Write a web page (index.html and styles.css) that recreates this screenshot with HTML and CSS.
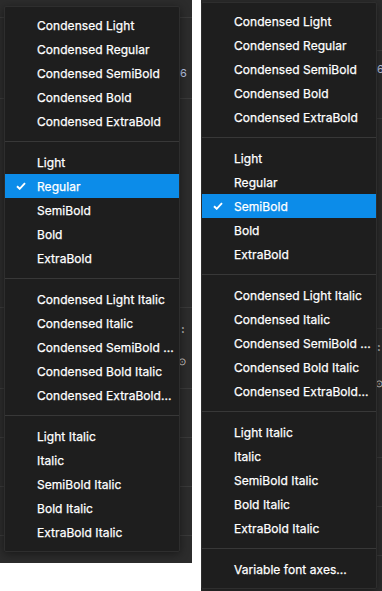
FILE: index.html
```html
<!DOCTYPE html>
<html>
<head>
<meta charset="utf-8">
<link rel="stylesheet" href="styles.css">
</head>
<body>
<div class="shots">
  <div class="shot shot-left">
    <span class="peek peek-six l-six">6</span>
    <span class="peek peek-dots l-dots">:</span>
    <span class="peek peek-eye l-eye">⊙</span>
    <div class="menu menu-left">
      <div class="group">
        <div class="item"><span class="chk"></span><span class="lbl">Condensed Light</span></div>
        <div class="item"><span class="chk"></span><span class="lbl">Condensed Regular</span></div>
        <div class="item"><span class="chk"></span><span class="lbl">Condensed SemiBold</span></div>
        <div class="item"><span class="chk"></span><span class="lbl">Condensed Bold</span></div>
        <div class="item"><span class="chk"></span><span class="lbl">Condensed ExtraBold</span></div>
      </div>
      <div class="sep"></div>
      <div class="group">
        <div class="item"><span class="chk"></span><span class="lbl">Light</span></div>
        <div class="item active"><span class="chk"><svg width="10" height="8" viewBox="0 0 10 8"><path d="M1 4.2 L3.7 6.8 L9 1.2" fill="none" stroke="#fff" stroke-width="1.9"/></svg></span><span class="lbl">Regular</span></div>
        <div class="item"><span class="chk"></span><span class="lbl">SemiBold</span></div>
        <div class="item"><span class="chk"></span><span class="lbl">Bold</span></div>
        <div class="item"><span class="chk"></span><span class="lbl">ExtraBold</span></div>
      </div>
      <div class="sep"></div>
      <div class="group">
        <div class="item"><span class="chk"></span><span class="lbl">Condensed Light Italic</span></div>
        <div class="item"><span class="chk"></span><span class="lbl">Condensed Italic</span></div>
        <div class="item"><span class="chk"></span><span class="lbl">Condensed SemiBold ...</span></div>
        <div class="item"><span class="chk"></span><span class="lbl">Condensed Bold Italic</span></div>
        <div class="item"><span class="chk"></span><span class="lbl">Condensed ExtraBold...</span></div>
      </div>
      <div class="sep"></div>
      <div class="group">
        <div class="item"><span class="chk"></span><span class="lbl">Light Italic</span></div>
        <div class="item"><span class="chk"></span><span class="lbl">Italic</span></div>
        <div class="item"><span class="chk"></span><span class="lbl">SemiBold Italic</span></div>
        <div class="item"><span class="chk"></span><span class="lbl">Bold Italic</span></div>
        <div class="item"><span class="chk"></span><span class="lbl">ExtraBold Italic</span></div>
      </div>
    </div>
  </div>
  <div class="shot shot-right">
    <span class="peek peek-six r-six">6</span>
    <span class="peek peek-dots r-dots">:</span>
    <span class="peek peek-eye r-eye">⊙</span>
    <div class="menu menu-right">
      <div class="group">
        <div class="item"><span class="chk"></span><span class="lbl">Condensed Light</span></div>
        <div class="item"><span class="chk"></span><span class="lbl">Condensed Regular</span></div>
        <div class="item"><span class="chk"></span><span class="lbl">Condensed SemiBold</span></div>
        <div class="item"><span class="chk"></span><span class="lbl">Condensed Bold</span></div>
        <div class="item"><span class="chk"></span><span class="lbl">Condensed ExtraBold</span></div>
      </div>
      <div class="sep"></div>
      <div class="group">
        <div class="item"><span class="chk"></span><span class="lbl">Light</span></div>
        <div class="item"><span class="chk"></span><span class="lbl">Regular</span></div>
        <div class="item active"><span class="chk"><svg width="10" height="8" viewBox="0 0 10 8"><path d="M1 4.2 L3.7 6.8 L9 1.2" fill="none" stroke="#fff" stroke-width="1.9"/></svg></span><span class="lbl">SemiBold</span></div>
        <div class="item"><span class="chk"></span><span class="lbl">Bold</span></div>
        <div class="item"><span class="chk"></span><span class="lbl">ExtraBold</span></div>
      </div>
      <div class="sep"></div>
      <div class="group">
        <div class="item"><span class="chk"></span><span class="lbl">Condensed Light Italic</span></div>
        <div class="item"><span class="chk"></span><span class="lbl">Condensed Italic</span></div>
        <div class="item"><span class="chk"></span><span class="lbl">Condensed SemiBold ...</span></div>
        <div class="item"><span class="chk"></span><span class="lbl">Condensed Bold Italic</span></div>
        <div class="item"><span class="chk"></span><span class="lbl">Condensed ExtraBold...</span></div>
      </div>
      <div class="sep"></div>
      <div class="group">
        <div class="item"><span class="chk"></span><span class="lbl">Light Italic</span></div>
        <div class="item"><span class="chk"></span><span class="lbl">Italic</span></div>
        <div class="item"><span class="chk"></span><span class="lbl">SemiBold Italic</span></div>
        <div class="item"><span class="chk"></span><span class="lbl">Bold Italic</span></div>
        <div class="item"><span class="chk"></span><span class="lbl">ExtraBold Italic</span></div>
      </div>
      <div class="sep"></div>
      <div class="group">
        <div class="item"><span class="chk"></span><span class="lbl">Variable font axes...</span></div>
      </div>
    </div>
  </div>
</div>
</body>
</html>
```

FILE: styles.css
```css
html, body {
  margin: 0;
  padding: 0;
  background: #ffffff;
}

body {
  font-family: Inter, "Noto Sans", sans-serif;
  font-size: 12px;
  color: #ffffff;
}

.shots {
  display: flex;
  align-items: flex-start;
  gap: 9px;
}

.shot {
  position: relative;
  background-color: #2c2c2c;
  overflow: hidden;
}

.shot-left {
  width: 192px;
  height: 563px;
  background-image:
    linear-gradient(#3a3a3a, #3a3a3a),
    linear-gradient(#3a3a3a, #3a3a3a),
    linear-gradient(#3a3a3a, #3a3a3a),
    linear-gradient(#3a3a3a, #3a3a3a),
    linear-gradient(#3a3a3a, #3a3a3a),
    linear-gradient(#3a3a3a, #3a3a3a),
    linear-gradient(#3a3a3a, #3a3a3a);
  background-repeat: no-repeat;
  background-size: 100% 1px;
  background-position: 0 17px, 0 98px, 0 307px, 0 388px, 0 437px, 0 486px, 0 535px;
}

.shot-right {
  width: 181px;
  height: 591px;
  background-image:
    linear-gradient(#3a3a3a, #3a3a3a),
    linear-gradient(#3a3a3a, #3a3a3a),
    linear-gradient(#3a3a3a, #3a3a3a),
    linear-gradient(#3a3a3a, #3a3a3a),
    linear-gradient(#3a3a3a, #3a3a3a),
    linear-gradient(#3a3a3a, #3a3a3a);
  background-repeat: no-repeat;
  background-size: 100% 1px;
  background-position: 0 50px, 0 118px, 0 328px, 0 457px, 0 506px, 0 555px;
}

.peek {
  position: absolute;
  font-size: 11px;
  color: #cfcfcf;
}

.peek-six { color: #b9c7e6; }

.l-six { left: 180px; top: 66px; }
.l-dots { left: 181px; top: 322px; font-weight: 700; }
.l-eye { left: 178px; top: 355px; font-size: 10px; }
.r-six { left: 176px; top: 62px; }
.r-dots { left: 176px; top: 340px; font-weight: 700; }
.r-eye { left: 174px; top: 377px; font-size: 10px; }

.menu {
  position: absolute;
  width: 176px;
  box-sizing: border-box;
  background: #1e1e1e;
  border: 1px solid #2e2e2e;
  border-radius: 2px;
  padding: 6px 0 7px;
  box-shadow: 0 2px 10px rgba(0, 0, 0, 0.45);
  z-index: 1;
}

.menu-left { left: 4px; top: 6px; }
.menu-right { left: 0; top: 2px; }

.group {
  display: flex;
  flex-direction: column;
}

.item {
  height: 24px;
  display: grid;
  grid-template-columns: 32px 1fr;
  align-items: center;
  white-space: nowrap;
  letter-spacing: 0.05px;
}

.lbl {
  -webkit-text-stroke: 0.25px #ffffff;
}

.item.active {
  background: #0c8ce9;
}

.chk {
  display: flex;
  align-items: center;
  justify-content: center;
  height: 24px;
}

.chk svg { display: block; }

.sep {
  height: 1px;
  background: #383838;
  margin: 8px 0;
}
```
